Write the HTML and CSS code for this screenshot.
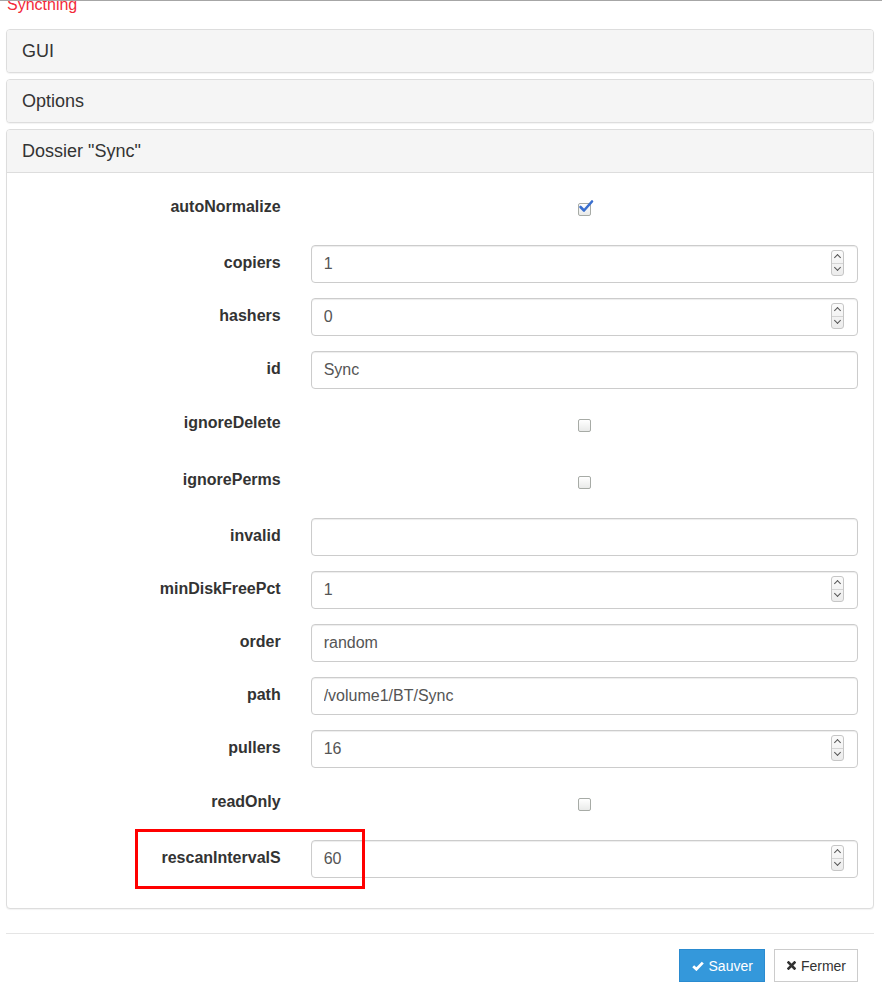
FILE: index.html
```html
<!DOCTYPE html>
<html lang="fr">
<head>
    <meta charset="UTF-8">
    <meta name="viewport" content="width=device-width, initial-scale=1.0">
    <title>Syncthing - Avancé</title>
    <link rel="stylesheet" href="styles.css">
</head>
<body>
    <div class="topbar"><span class="brand">Syncthing</span></div>
    <div class="page">
        <div class="panel-group">
            <div class="panel">
                <div class="panel-heading">GUI</div>
            </div>
            <div class="panel">
                <div class="panel-heading">Options</div>
            </div>
            <div class="panel">
                <div class="panel-heading">Dossier "Sync"</div>
                <div class="panel-body">
                    <form class="form-horizontal">
                        <div class="form-group check-row">
                            <label class="control-label">autoNormalize</label>
                            <div class="field field-check">
                                <span class="checkbox checked">
                                    <svg width="16" height="15" viewBox="0 0 16 15"><path d="M2.5 8 L6 11.5 L14 2.5" fill="none" stroke="#3a6fcf" stroke-width="2.6" stroke-linecap="round" stroke-linejoin="round"/></svg>
                                </span>
                            </div>
                        </div>
                        <div class="form-group">
                            <label class="control-label">copiers</label>
                            <div class="field"><div class="input-wrap"><input class="form-control" type="text" value="1"><span class="spinner"><i class="up"></i><i class="down"></i></span></div></div>
                        </div>
                        <div class="form-group">
                            <label class="control-label">hashers</label>
                            <div class="field"><div class="input-wrap"><input class="form-control" type="text" value="0"><span class="spinner"><i class="up"></i><i class="down"></i></span></div></div>
                        </div>
                        <div class="form-group">
                            <label class="control-label">id</label>
                            <div class="field"><input class="form-control" type="text" value="Sync"></div>
                        </div>
                        <div class="form-group check-row">
                            <label class="control-label">ignoreDelete</label>
                            <div class="field field-check"><span class="checkbox"></span></div>
                        </div>
                        <div class="form-group check-row">
                            <label class="control-label">ignorePerms</label>
                            <div class="field field-check"><span class="checkbox"></span></div>
                        </div>
                        <div class="form-group">
                            <label class="control-label">invalid</label>
                            <div class="field"><input class="form-control" type="text" value=""></div>
                        </div>
                        <div class="form-group">
                            <label class="control-label">minDiskFreePct</label>
                            <div class="field"><div class="input-wrap"><input class="form-control" type="text" value="1"><span class="spinner"><i class="up"></i><i class="down"></i></span></div></div>
                        </div>
                        <div class="form-group">
                            <label class="control-label">order</label>
                            <div class="field"><input class="form-control" type="text" value="random"></div>
                        </div>
                        <div class="form-group">
                            <label class="control-label">path</label>
                            <div class="field"><input class="form-control" type="text" value="/volume1/BT/Sync"></div>
                        </div>
                        <div class="form-group">
                            <label class="control-label">pullers</label>
                            <div class="field"><div class="input-wrap"><input class="form-control" type="text" value="16"><span class="spinner"><i class="up"></i><i class="down"></i></span></div></div>
                        </div>
                        <div class="form-group check-row">
                            <label class="control-label">readOnly</label>
                            <div class="field field-check"><span class="checkbox"></span></div>
                        </div>
                        <div class="form-group">
                            <label class="control-label">rescanIntervalS</label>
                            <div class="field"><div class="input-wrap"><input class="form-control" type="text" value="60"><span class="spinner"><i class="up"></i><i class="down"></i></span></div></div>
                            <span class="highlight"></span>
                        </div>
                    </form>
                </div>
            </div>
        </div>

        <div class="modal-footer">
            <button class="btn btn-primary" type="button">
                <svg class="icon" width="12" height="10" viewBox="0 0 12 10"><path d="M1.2 5.2 L4.4 8.2 L10.8 1.6" fill="none" stroke="#fff" stroke-width="2.8" stroke-linejoin="miter"/></svg>Sauver
            </button>
            <button class="btn btn-default" type="button">
                <svg class="icon icon-x" width="9" height="9" viewBox="0 0 9 9"><path d="M1.5 1.5 L7.5 7.5 M7.5 1.5 L1.5 7.5" stroke="#333" stroke-width="2.6" stroke-linecap="square"/></svg>Fermer
            </button>
        </div>
    </div>
</body>
</html>
```

FILE: styles.css
```css
body {
    margin: 0;
    font-family: "Liberation Sans", Arial, sans-serif;
    font-size: 16px;
    color: #333;
    background: #fff;
}
.topbar {
    position: relative;
    display: flow-root;
    height: 13px;
    padding-left: 7px;
}
.topbar::before {
    content: "";
    position: absolute;
    top: 0;
    left: 0;
    right: 0;
    height: 1px;
    background: #a6a6a6;
    z-index: 1;
}
.brand {
    display: block;
    margin-top: -3px;
    line-height: 16px;
    color: #f22a3a;
}
.page {
    padding: 0 8px 0 6px;
}
.panel-group {
    margin-top: 16px;
}
.panel {
    border: 1px solid #ddd;
    border-radius: 4px;
    background: #fff;
    box-shadow: 0 1px 1px rgba(0, 0, 0, 0.05);
    margin-bottom: 6px;
    overflow: hidden;
}
.panel-heading {
    background: #f5f5f5;
    padding: 11px 15px;
    font-size: 18px;
    line-height: 20px;
    color: #333;
}
.panel .panel-body {
    border-top: 1px solid #ddd;
    padding: 15px 15px 15px;
}
.form-group {
    position: relative;
    display: grid;
    grid-template-columns: 1fr 2fr;
    margin: 0 -15px 15px;
    min-height: 38px;
}
.check-row {
    min-height: 42px;
}
.control-label {
    padding: 8px 15px 0;
    text-align: right;
    font-weight: bold;
    line-height: 20px;
}
.check-row .control-label {
    padding-top: 9px;
}
.field {
    padding: 0 15px;
}
.field-check {
    display: flex;
    justify-content: center;
    padding-top: 15px;
}
.input-wrap {
    position: relative;
}
.form-control {
    display: block;
    box-sizing: border-box;
    width: 100%;
    height: 38px;
    padding: 6px 12px;
    font-family: inherit;
    font-size: 16px;
    color: #555;
    background: #fff;
    border: 1px solid #ccc;
    border-radius: 4px;
    box-shadow: inset 0 1px 1px rgba(0, 0, 0, 0.075);
    outline: none;
}
.spinner {
    position: absolute;
    top: 5px;
    right: 14px;
    width: 11px;
    height: 24px;
    border: 1px solid #c6c6c6;
    border-radius: 3px;
    background: linear-gradient(#fbfbfb, #ececec);
    display: flex;
    flex-direction: column;
}
.spinner i {
    flex: 1;
    position: relative;
}
.spinner i.up {
    border-bottom: 1px solid #d4d4d4;
}
.spinner i::after {
    content: "";
    position: absolute;
    left: 3px;
    width: 4px;
    height: 4px;
    border-left: 1.5px solid #555;
    border-top: 1.5px solid #555;
}
.spinner i.up::after {
    top: 4px;
    transform: rotate(45deg);
}
.spinner i.down::after {
    top: 1px;
    transform: rotate(225deg);
}
.checkbox {
    position: relative;
    box-sizing: border-box;
    width: 13px;
    height: 13px;
    border: 1px solid #a7aba6;
    border-radius: 2px;
    background: linear-gradient(#ffffff, #e9eae9);
}
.checkbox svg {
    position: absolute;
    left: -1px;
    top: -5px;
}
.highlight {
    position: absolute;
    left: 128px;
    top: -11px;
    width: 230px;
    height: 60px;
    box-sizing: border-box;
    border: 3px solid #f00;
}
.modal-footer {
    margin-top: 24px;
    border-top: 1px solid #e5e5e5;
    padding: 15px 16px 15px;
    display: flex;
    justify-content: flex-end;
    gap: 9px;
}
.btn {
    display: inline-flex;
    align-items: center;
    height: 33px;
    padding: 0 11px 0 12px;
    font-family: inherit;
    font-size: 14px;
    border-radius: 0;
    cursor: pointer;
}
.btn .icon {
    margin-right: 5px;
}
.btn-primary {
    background: #3498db;
    border: 1px solid #2a8bd0;
    color: #fff;
}
.btn-default {
    background: #fff;
    border: 1px solid #ccc;
    color: #333;
}
```
